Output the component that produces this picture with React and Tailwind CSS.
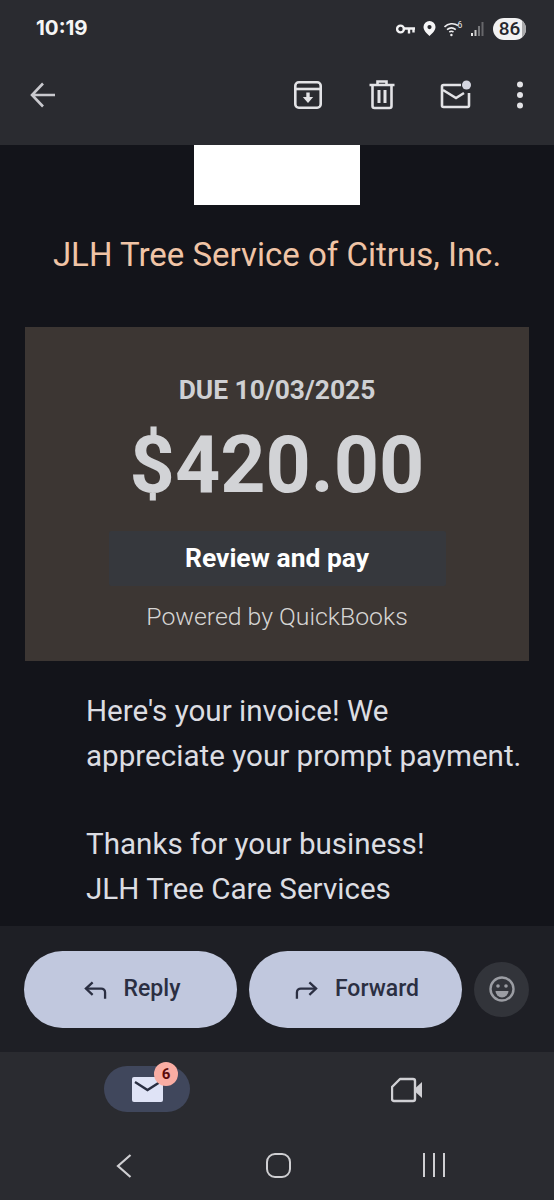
import React from 'react';

const roboto = { fontFamily: 'Roboto, sans-serif' };

function Key() {
  return (
    <svg width="19" height="12" viewBox="0 0 19 12" fill="none" stroke="#f2f2f3" strokeWidth="2.400">
      <circle cx="4.500" cy="6" r="3.400" />
      <path d="M8 5.500h11M13 5.500v5M17.500 5.500v4" />
    </svg>
  );
}

function Pin() {
  return (
    <svg width="13" height="15" viewBox="0 0 12 15">
      <path fillRule="evenodd" fill="#f6f6f7" d="M6 0a6 6 0 0 1 6 6c0 3.600-3.400 6.600-6 9-2.600-2.400-6-5.400-6-9a6 6 0 0 1 6-6zm0 4a2.100 2.100 0 1 0 0 4.200a2.100 2.100 0 0 0 0-4.200z" />
    </svg>
  );
}

function Wifi() {
  return (
    <svg width="19" height="16" viewBox="0 0 19 16" fill="none" stroke="#ececee" strokeWidth="1.600">
      <path d="M0.500 6a10.500 10.500 0 0 1 13.500 -1.500M3 8.700a7 7 0 0 1 8.800 0M5.300 11a3.600 3.600 0 0 1 4.200 0" />
      <circle cx="7.400" cy="14" r="1.200" fill="#ececee" stroke="none" />
      <text x="13.500" y="6.500" fontSize="8.500" fill="#ececee" stroke="none" style={roboto}>6</text>
    </svg>
  );
}

function Signal() {
  return (
    <svg width="14" height="15" viewBox="0 0 14 15">
      <rect x="0" y="12" width="2" height="3" fill="#e8e8e8" />
      <rect x="3.500" y="9" width="2" height="6" fill="#c8c8c8" />
      <rect x="7" y="5" width="2" height="10" fill="#77787b" />
      <rect x="10.500" y="1" width="2" height="14" fill="#66676a" />
    </svg>
  );
}

function Battery() {
  return (
    <div className="relative flex h-[22px] w-[33px] items-center justify-center overflow-hidden rounded-full bg-[#f1f1f2]">
      <div className="absolute inset-y-0 right-0 w-[4px] bg-[#a9a9ab]" />
      <span className="relative text-[19px] font-medium leading-none text-[#26272c]">86</span>
    </div>
  );
}

function ArchiveIcon() {
  return (
    <svg width="30" height="30" viewBox="0 0 30 30" fill="none" stroke="#e3e3e6" strokeWidth="2.600" strokeLinejoin="round">
      <rect x="2.300" y="2.300" width="25.400" height="25.400" rx="3.500" />
      <path d="M2.300 9h25.400" />
      <path d="M15 12.500v6" strokeWidth="3.400" />
      <path d="M9.800 17h10.400L15 23z" fill="#e3e3e6" stroke="none" />
    </svg>
  );
}

function TrashIcon() {
  return (
    <svg width="26" height="30" viewBox="0 0 26 30" fill="none" stroke="#e3e3e6" strokeWidth="2.600">
      <path d="M0.500 5h25M8.500 4V1.500h9V4" />
      <path d="M3.500 5v21a2 2 0 0 0 2 2h15a2 2 0 0 0 2-2V5" />
      <path d="M10 10v13M16 10v13" strokeWidth="3" />
    </svg>
  );
}

function UnreadIcon() {
  return (
    <svg width="32" height="30" viewBox="0 0 32 30" fill="none" stroke="#e3e3e6" strokeWidth="2.600">
      <path d="M21 5H3.500a1.500 1.500 0 0 0-1.500 1.500v19A1.500 1.500 0 0 0 3.500 27h24a1.500 1.500 0 0 0 1.500-1.500V13" />
      <path d="M3 10l13 8 8-5" />
      <circle cx="26.500" cy="5" r="4.500" fill="#d5d6e0" stroke="none" />
    </svg>
  );
}

function MoreIcon() {
  return (
    <svg width="10" height="28" viewBox="0 0 10 28" fill="#e3e3e6">
      <circle cx="5" cy="3.500" r="3" />
      <circle cx="5" cy="14" r="3" />
      <circle cx="5" cy="24.500" r="3" />
    </svg>
  );
}

function ReplyIcon({ flip }) {
  return (
    <svg width="23" height="20" viewBox="0 0 24 20" fill="none" stroke="#2b2f42" strokeWidth="2.400" className={flip ? '-scale-x-100' : ''}>
      <path d="M9 2L2 8.500 9 15" />
      <path d="M2 8.500h16a4 4 0 0 1 4 4V19" />
    </svg>
  );
}

function PillButton({ flip, label }) {
  return (
    <button className="flex h-[77px] w-[213px] items-center justify-center gap-[17px] rounded-full bg-[#c1c8de] pl-[3px] pt-[1px] text-[23px] font-medium text-[#2b2f42]">
      <ReplyIcon flip={flip} />
      <span>{label}</span>
    </button>
  );
}

export default function App() {
  return (
    <div className="flex h-[1200px] w-[554px] flex-col overflow-hidden bg-[#13141a]" style={roboto}>
      {/* Status bar + toolbar */}
      <header className="h-[145px] shrink-0 bg-[#2a2b30]">
        <div className="flex h-[57px] items-center justify-between pl-[36px] pr-[28px]">
          <span className="text-[20.500px] font-bold text-[#f5f5f5]" style={{ fontFamily: 'Inter, sans-serif' }}>10:19</span>
          <div className="flex items-center gap-[8px]">
            <Key />
            <Pin />
            <Wifi />
            <Signal />
            <Battery />
          </div>
        </div>
        <div className="flex h-[76px] items-center pl-[30px] pr-[29px]">
          <svg width="25" height="26" viewBox="0 0 25 26" fill="none" stroke="#c9c9ce" strokeWidth="2.600">
            <path d="M13 1.500L2 13l11 11.500M2 13h24" />
          </svg>
          <div className="ml-auto flex items-center">
            <ArchiveIcon />
            <div className="ml-[46px]"><TrashIcon /></div>
            <div className="ml-[45px]"><UnreadIcon /></div>
            <div className="ml-[43px]"><MoreIcon /></div>
          </div>
        </div>
      </header>

      {/* Email body */}
      <main className="flex-1">
        <div className="mx-auto h-[60px] w-[166px] bg-white" />
        <h1 className="mt-[28px] text-center text-[33px] leading-[44px] text-[#f0c4a6]">JLH Tree Service of Citrus, Inc.</h1>

        <section className="mx-[25px] mt-[50px] flex h-[334px] flex-col items-center bg-[#3c3633]">
          <p className="mt-[45px] text-[26.400px] font-bold leading-[36px] text-[#cfd0d3]">DUE 10/03/2025</p>
          <p className="mt-[13px] text-[79px] font-bold leading-[88px] text-[#d2d3d6]">$420.00</p>
          <button className="mt-[22px] h-[55px] w-[337px] rounded-[2px] bg-[#36383d] pt-[1px] text-[26.400px] font-bold text-white">Review and pay</button>
          <p className="mt-[15px] text-[24.800px] font-light leading-[32px] text-[#d6d5d3]">Powered by QuickBooks</p>
        </section>

        <div className="mt-[28px] pl-[86px] text-[29.600px] leading-[45px] text-[#dcdde2]">
          <p>Here's your invoice! We</p>
          <p className="whitespace-nowrap">appreciate your prompt payment.</p>
          <p className="mt-[43px]">Thanks for your business!</p>
          <p>JLH Tree Care Services</p>
        </div>
      </main>

      {/* Reply actions */}
      <div className="flex h-[126px] shrink-0 items-center gap-[12px] bg-[#1e1f25] pl-[24px]">
        <PillButton label="Reply" />
        <PillButton flip label="Forward" />
        <button className="flex h-[55px] w-[55px] items-center justify-center rounded-full bg-[#32343a]">
          <svg width="26" height="26" viewBox="0 0 26 26" fill="none" stroke="#9b9da3" strokeWidth="2.400">
            <circle cx="13" cy="13" r="11.500" />
            <circle cx="9" cy="10" r="1.800" fill="#9b9da3" stroke="none" />
            <circle cx="17" cy="10" r="1.800" fill="#9b9da3" stroke="none" />
            <path d="M6.500 15h13a6.500 6.500 0 0 1-13 0z" fill="#9b9da3" stroke="none" />
          </svg>
        </button>
      </div>

      {/* Bottom nav */}
      <nav className="h-[148px] shrink-0 bg-[#2a2b30]">
        <div className="flex h-[85px] items-start pl-[104px] pt-[14px]">
          <div className="relative flex h-[46px] w-[86px] items-center justify-center rounded-full bg-[#40475c]">
            <svg width="31" height="25" viewBox="0 0 31 25">
              <rect width="31" height="25" rx="2" fill="#dfe3f6" />
              <path d="M3 5l12.500 8 12.500-8" fill="none" stroke="#2a2f42" strokeWidth="2.400" />
            </svg>
            <span className="absolute right-[12px] top-[-4px] flex h-[24px] w-[24px] items-center justify-center rounded-full bg-[#f9ada3] text-[15px] font-bold text-[#5c0a0a]">6</span>
          </div>
          <svg width="32" height="26" viewBox="0 0 32 26" fill="none" stroke="#d0d0d4" strokeWidth="2.400" className="ml-[201px] mt-[11px]">
            <path d="M9 2h13a2 2 0 0 1 2 2v18a2 2 0 0 1-2 2H3a2 2 0 0 1-2-2V10z" strokeLinejoin="round" />
            <path d="M25 10.500L31 5v16l-6-5.500z" fill="#d0d0d4" stroke="none" />
          </svg>
        </div>
        <div className="flex h-[63px] items-start pt-[16px]">
          <svg width="18" height="26" viewBox="0 0 18 26" fill="none" stroke="#cfcfd2" strokeWidth="2.200" className="ml-[115px]">
            <path d="M15.500 2L3 13l12.500 11" />
          </svg>
          <div className="ml-[133px] h-[25px] w-[25px] rounded-[9px] border-[2px] border-[#cfcfd2]" />
          <div className="ml-[132px] flex h-[24px] gap-[8px]">
            <div className="h-full w-[2px] bg-[#cfcfd2]" />
            <div className="h-full w-[2px] bg-[#cfcfd2]" />
            <div className="h-full w-[2px] bg-[#cfcfd2]" />
          </div>
        </div>
      </nav>
    </div>
  );
}
